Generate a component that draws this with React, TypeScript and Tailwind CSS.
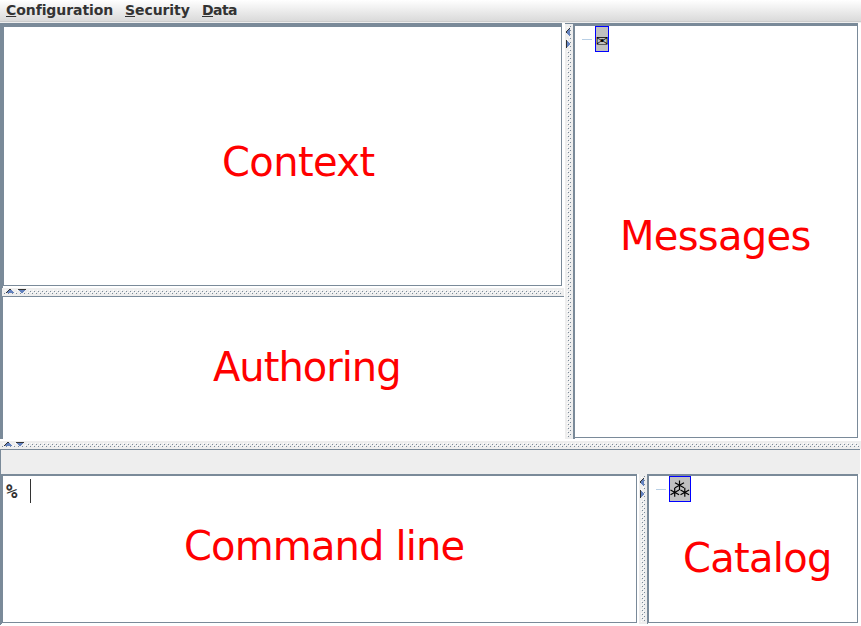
import React from "react";

function Bumps({ id, vertical = false, w, h }: { id: string; vertical?: boolean; w: number; h: number }) {
  return (
    <svg width={w} height={h} className="block shrink-0" shapeRendering="crispEdges">
      <defs>
        <pattern id={id} x={vertical ? 0 : 1} y={vertical ? 1 : 0} width="4" height="4" patternUnits="userSpaceOnUse">
          <rect x="0" y="0" width="1" height="1" fill="#fff" />
          <rect x="1" y="1" width="1" height="1" fill="#7a8a99" />
          <rect x="2" y="2" width="1" height="1" fill="#fff" />
          <rect x="3" y="3" width="1" height="1" fill="#7a8a99" />
        </pattern>
      </defs>
      <rect width={w} height={h} fill="#eee" />
      <rect x="2" y="2" width={w - 4} height={h - 4} fill={`url(#${id})`} />
      <g transform={vertical ? "matrix(0 1 1 0 0 0)" : undefined}>
        <path d="M4 1h9v4H4zM16 1h9v4h-9z" fill="#eee" />
        <path d="M8 1h1v1h1v1h1v1h1v1H4V4h1V3h1V2h2z" fill="#6382bf" />
        <path d="M4 4h1v1H4zM5 3h1v1H5zM6 2h1v1H6zM7 1h2v1H7z" fill="#333" />
        <path d="M17 2h6v1h-1v1h-1v1h-2V4h-1V3h-1z" fill="#6382bf" />
        <path d="M16 1h8v1h-8z" fill="#333" />
      </g>
    </svg>
  );
}

function Menu({ label, className }: { label: string; className: string }) {
  return (
    <span className={className}>
      <span className="underline decoration-1 underline-offset-[1px] [text-decoration-skip-ink:none]">{label[0]}</span>
      {label.slice(1)}
    </span>
  );
}

function Asterism() {
  return (
    <svg width="20" height="24" viewBox="0 0 20 24" fill="none" stroke="#000" strokeWidth="1.2">
      <path d="M9.500 3.500v9.500M5 5.700l9 5M14 5.700l-9 5" />
      <path d="M4.700 10.800v9M.5 13l8.600 4.800M9.100 13L.5 17.800" />
      <path d="M14.800 10.800v9M10.500 13l8.600 4.800M19.100 13l-8.600 4.800" />
    </svg>
  );
}

const title = "block whitespace-nowrap text-[40px] leading-[48px] text-[#f00]";

export default function App() {
  return (
    <div className="flex h-[626px] w-[861px] flex-col overflow-hidden bg-white font-['DejaVu_Sans',sans-serif]">
      <div className="h-[23px] shrink-0 bg-[#eee]">
        <header className="flex h-[22px] border-b border-[#ccc] bg-linear-to-b from-white to-[#dadada] pl-[6px] text-[14px] leading-[20px] font-bold tracking-[-0.08px] text-[#333]">
          <Menu label="Configuration" className="w-[119px]" />
          <Menu label="Security" className="w-[77px]" />
          <Menu label="Data" className="tracking-[-0.6px]" />
        </header>
      </div>
      <main className="flex h-[418px] shrink-0">
        <div className="flex w-[565px] flex-col">
          <section className="h-[263px] w-[562px] border-t-4 border-r border-b border-l-4 border-[#7a8a99] pt-[111px] pl-[218px]">
            <span className={`${title} tracking-[-0.6px]`}>Context</span>
          </section>
          <div className="h-[2px] w-[3px] bg-[#7a8a99]" />
          <div className="flex h-[8px] border-l-2 border-[#7a8a99]">
            <Bumps id="b1" w={562} h={8} />
          </div>
          <section className="h-[143px] w-[564px] border-t border-l-[3px] border-[#7a8a99] pt-[46px] pl-[210px]">
            <span className={`${title} tracking-[-1px]`}>Authoring</span>
          </section>
        </div>
        <div className="flex h-[416px] border-t border-[#7a8a99]">
          <Bumps id="b2" vertical w={8} h={415} />
        </div>
        <div className="w-[288px]">
          <section className="h-[415px] w-[285px] border-t-[3px] border-r border-b border-l-2 border-[#7a8a99]">
            <div className="flex h-[25px] items-start pl-[7px]">
              <span className="mt-[13px] h-px w-[10px] bg-[#b8cfe5]" />
              <span className="ml-[3px] flex h-[26px] w-[14px] items-center justify-center border border-[#00f] bg-[#c0c0c0] pt-[3px] text-[15px] leading-[22px] text-black">✉</span>
            </div>
            <span className={`${title} pt-[161px] pl-[45px] tracking-[-0.7px]`}>Messages</span>
          </section>
          <div className="h-px w-[2px] bg-[#7a8a99]" />
        </div>
      </main>
      <Bumps id="b3" w={861} h={8} />
      <div className="mr-px h-[25px] shrink-0 border-t border-l border-[#7a8a99] bg-[#eee]" />
      <main className="flex h-[152px] shrink-0">
        <div className="w-[639px]">
          <section className="h-[149px] w-[637px] border-t-2 border-r border-b border-l-[3px] border-[#7a8a99]">
            <div className="flex h-[46px] pt-[3px] pl-[3px] font-['DejaVu_Sans_Mono',monospace] text-[19px] leading-[24px] font-bold text-[#333]">
              <span className="w-[24px]">%</span>
              <span className="h-[24px] w-px bg-[#333]" />
            </div>
            <span className={`${title} pl-[181px] tracking-[-0.85px]`}>Command line</span>
          </section>
          <div className="h-px w-[2px] bg-[#7a8a99]" />
          <div className="h-px w-px bg-[#7a8a99]" />
        </div>
        <Bumps id="b4" vertical w={8} h={150} />
        <div>
          <section className="h-[149px] w-[211px] border-t-2 border-r border-b border-l-2 border-[#7a8a99]">
            <div className="flex h-[58px] items-start pl-[7px]">
              <span className="mt-[13px] h-px w-[10px] bg-[#b8cfe5]" />
              <span className="ml-[3px] flex h-[26px] w-[22px] border border-[#00f] bg-[#c0c0c0]">
                <Asterism />
              </span>
            </div>
            <span className={`${title} pl-[34px] tracking-[-0.7px]`}>Catalog</span>
          </section>
          <div className="h-px w-[1px] bg-[#7a8a99]" />
        </div>
      </main>
    </div>
  );
}
